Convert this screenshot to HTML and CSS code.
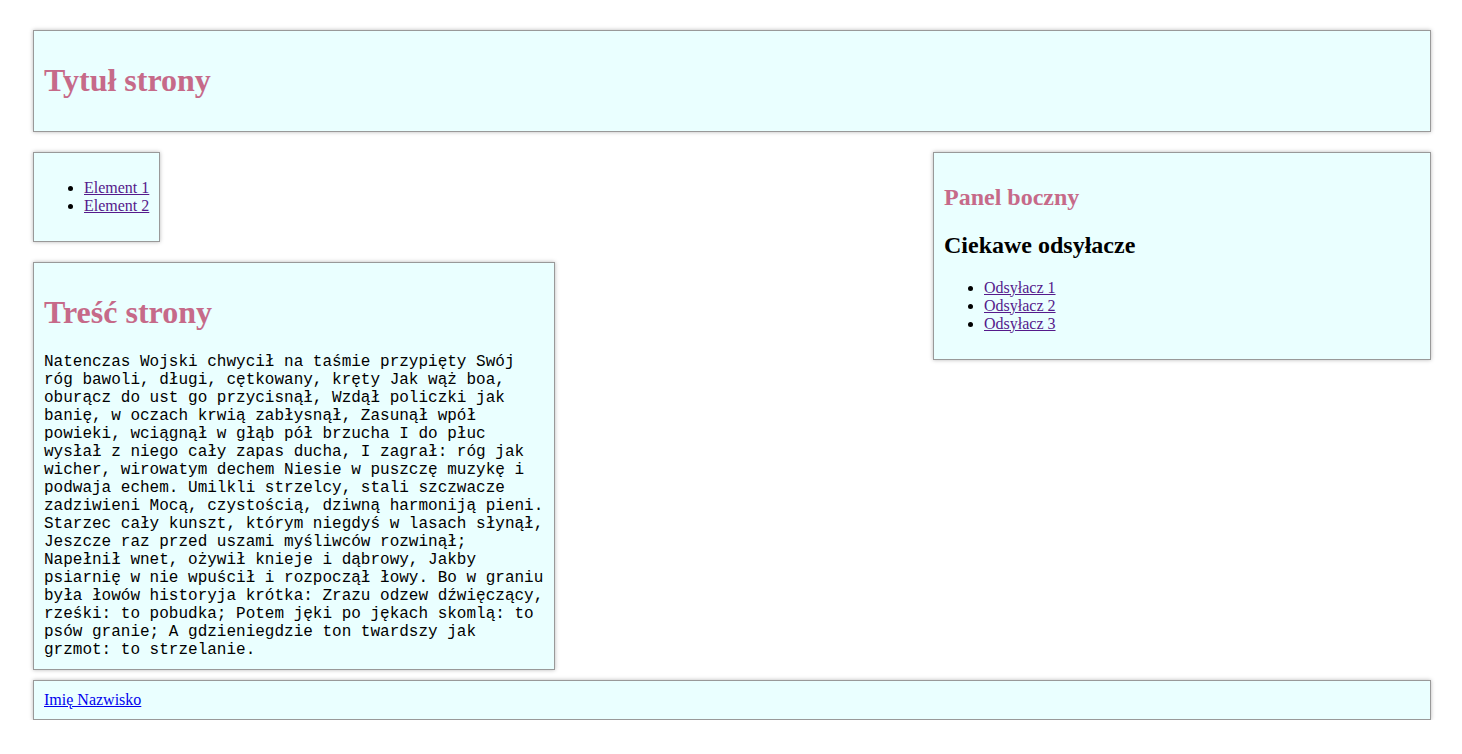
FILE: index.html
```html
<!DOCTYPE html>
<html lang="pl">
<head>
<meta charset="utf-8">
<title>Tytuł strony</title>
<link rel="stylesheet" href="styles.css">
</head>
<body>
<div class="page">
  <header class="box header">
    <h1 class="title">Tytuł strony</h1>
  </header>
  <div class="row">
    <div class="left">
      <nav class="box nav">
        <ul class="list">
          <li><a class="visited" href="#">Element 1</a></li>
          <li><a class="visited" href="#">Element 2</a></li>
        </ul>
      </nav>
      <main class="box main">
        <h1 class="title">Treść strony</h1>
        <p class="text">Natenczas Wojski chwycił na taśmie przypięty Swój róg bawoli, długi, cętkowany, kręty Jak wąż boa, oburącz do ust go przycisnął, Wzdął policzki jak banię, w oczach krwią zabłysnął, Zasunął wpół powieki, wciągnął w głąb pół brzucha I do płuc wysłał z niego cały zapas ducha, I zagrał: róg jak wicher, wirowatym dechem Niesie w puszczę muzykę i podwaja echem. Umilkli strzelcy, stali szczwacze zadziwieni Mocą, czystością, dziwną harmoniją pieni. Starzec cały kunszt, którym niegdyś w lasach słynął, Jeszcze raz przed uszami myśliwców rozwinął; Napełnił wnet, ożywił knieje i dąbrowy, Jakby psiarnię w nie wpuścił i rozpoczął łowy. Bo w graniu była łowów historyja krótka: Zrazu odzew dźwięczący, rześki: to pobudka; Potem jęki po jękach skomlą: to psów granie; A gdzieniegdzie ton twardszy jak grzmot: to strzelanie.</p>
      </main>
    </div>
    <aside class="box side">
      <h2 class="sub title">Panel boczny</h2>
      <h2 class="sub">Ciekawe odsyłacze</h2>
      <ul class="list">
        <li><a class="visited" href="#">Odsyłacz 1</a></li>
        <li><a class="visited" href="#">Odsyłacz 2</a></li>
        <li><a class="visited" href="#">Odsyłacz 3</a></li>
      </ul>
    </aside>
  </div>
  <footer class="box footer">
    <a class="link" href="#">Imię Nazwisko</a>
  </footer>
</div>
</body>
</html>
```
FILE: styles.css
```css
html, body {
  margin: 0;
  padding: 0;
  background: #fff;
}
body {
  font-family: "Liberation Serif", "Times New Roman", serif;
  font-size: 16px;
  color: #000;
}
.page {
  padding: 30px 31px 0 33px;
  display: flex;
  flex-direction: column;
}
.box {
  background: #eaffff;
  border: 1px solid #999;
  box-shadow: 0 0 4px rgba(0, 0, 0, 0.28);
  padding: 10px;
}
.title {
  color: #c66a89;
}
h1 {
  font-size: 32px;
  margin: 21.44px 0;
  font-weight: bold;
}
.sub {
  font-size: 24px;
  line-height: 28px;
  margin: 19.92px 0;
  font-weight: bold;
}
.sub + .sub {
  margin-top: 0;
}
.row {
  margin-top: 20px;
  display: grid;
  grid-template-columns: 1fr 498px;
  align-items: start;
}
.left {
  display: flex;
  flex-direction: column;
  align-items: flex-start;
  gap: 20px;
}
.list {
  margin: 16px 0;
  padding-left: 40px;
}
.side .list {
  margin-top: 0;
}
.main {
  width: 500px;
}
.text {
  font-family: "Liberation Mono", "Courier New", monospace;
  font-size: 16px;
  line-height: 18px;
  margin: 0;
}
.footer {
  margin-top: 10px;
  line-height: 18px;
}
.visited {
  color: #551a8b;
}
.link {
  color: #0000ee;
}
```
